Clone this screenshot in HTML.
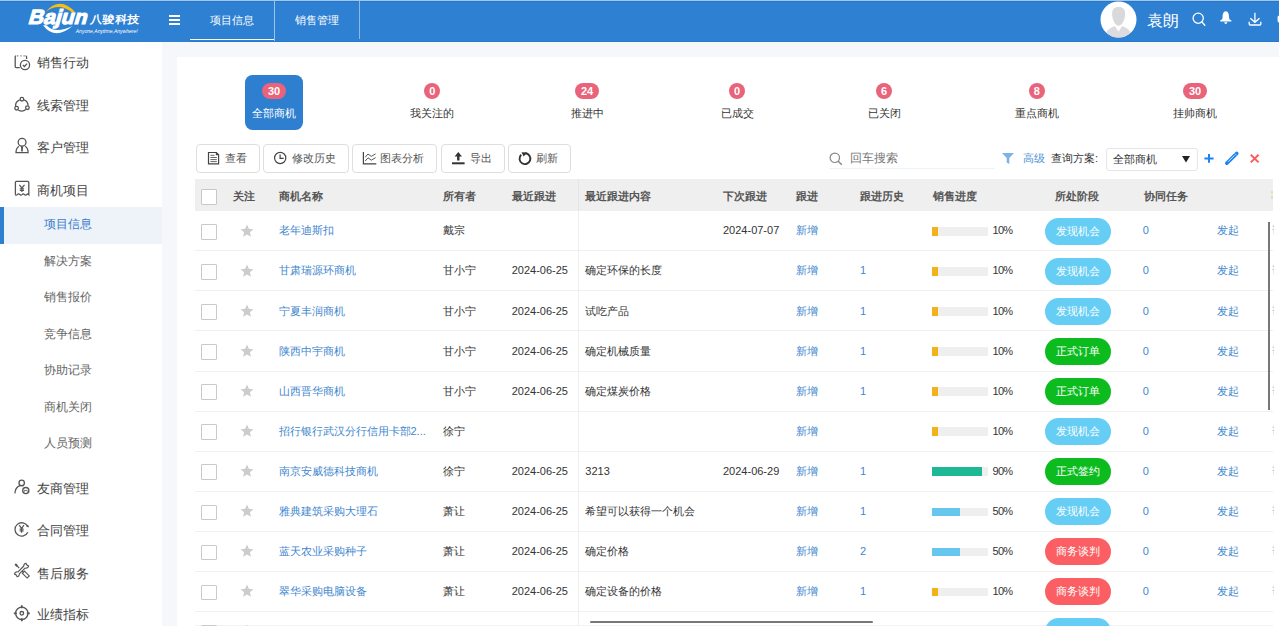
<!DOCTYPE html>
<html><head><meta charset="utf-8"><title>商机项目</title>
<style>
*{margin:0;padding:0;box-sizing:border-box}
html,body{width:1279px;height:626px;overflow:hidden}
body{position:relative;font-family:"Liberation Sans",sans-serif;background:#f5f7fb;color:#333}
.a{position:absolute}
.t{position:absolute;white-space:nowrap}
svg{position:absolute;overflow:visible}
</style></head><body>
<div class="a" style="left:0;top:0;width:1279px;height:42px;background:#2e80d2"></div>
<div class="a" style="left:0;top:0;width:1279px;height:1px;background:#a3c6ea"></div>
<div class="a" style="left:0;top:1px;width:1279px;height:1px;background:#2277d0"></div>
<svg style="left:0;top:0" width="160" height="42" viewBox="0 0 160 42">
<path d="M45.5 12 Q60 -4.5 75.5 12.5 L72.5 12.8 Q59 1.5 45.5 12 Z" fill="#f9bd12"/>
<path d="M43 25.2 Q55 41 72.5 26 Q55 34.5 46.5 25.2 Z" fill="#fff"/>
<g transform="translate(27.5,24) skewX(-16)"><text x="0" y="0" font-family="Liberation Sans" font-weight="bold" font-size="20.5" fill="#fff" stroke="#fff" stroke-width="1.1" textLength="58.5" lengthAdjust="spacingAndGlyphs">Bajun</text></g>
<g transform="translate(75.5,33.2) skewX(-10)"><text x="0" y="0" font-family="Liberation Sans" font-size="5.6" fill="#fff" textLength="62" lengthAdjust="spacingAndGlyphs">Anyone,Anytime,Anywhere!</text></g>
</svg>
<div class="t" style="left:89.5px;top:12.0px;font-size:12px;line-height:14px;color:#fff;font-weight:bold;letter-spacing:0.6px;transform:skewX(-6deg) scaleY(0.9)">八骏科技</div>
<div class="a" style="left:169px;top:15px;width:11px;height:2px;background:#fff"></div><div class="a" style="left:169px;top:19px;width:11px;height:2px;background:#fff"></div><div class="a" style="left:169px;top:23px;width:11px;height:2px;background:#fff"></div>
<div class="t" style="left:210px;top:12.5px;font-size:11px;line-height:14px;color:#fff;font-weight:normal;">项目信息</div>
<div class="a" style="left:190px;top:41px;width:1089px;height:1px;background:#2578d0"></div>
<div class="a" style="left:190px;top:38.6px;width:84.5px;height:1.7px;background:#fff"></div>
<div class="a" style="left:274px;top:0;width:1px;height:41px;background:#9cc2ea"></div>
<div class="t" style="left:295px;top:12.5px;font-size:11px;line-height:14px;color:#fff;font-weight:normal;">销售管理</div>
<div class="a" style="left:359px;top:1px;width:1px;height:38px;background:#8db8e6"></div>
<svg style="left:1100px;top:1px" width="37" height="37" viewBox="0 0 37 37">
<defs><clipPath id="cav"><circle cx="18.5" cy="18.5" r="18"/></clipPath></defs>
<circle cx="18.5" cy="18.5" r="18" fill="#fff"/>
<g clip-path="url(#cav)" fill="#d9d9dc">
<path d="M18.6 6 C14.2 6 12.1 8.3 12.1 12.8 C12.1 18.8 15.2 24.8 18.6 24.8 C22 24.8 25.1 18.8 25.1 12.8 C25.1 8.3 23 6 18.6 6 Z"/>
<path d="M4.5 37 C5 30.5 8.5 27.6 14.8 24.9 L18.5 30.6 L22.2 24.9 C28.5 27.6 32 30.5 32.5 37 Z" fill="#dcdce0"/>
</g></svg>
<div class="t" style="left:1146.8px;top:10.7px;font-size:16px;line-height:20px;color:#fff;font-weight:normal;">袁朗</div>
<svg style="left:1180px;top:0" width="99" height="42" viewBox="1180 0 99 42">
<circle cx="1198.2" cy="18.2" r="5.1" fill="none" stroke="#fff" stroke-width="1.3"/>
<path d="M1201.9 21.9 L1204.8 25.2" stroke="#fff" stroke-width="1.4" stroke-linecap="round"/>
<path d="M1225.8 11.2 C1223.2 11.2 1222.6 14.5 1222.6 17 L1222.2 19.2 L1220.2 20.6 L1220.2 21.4 L1231.4 21.4 L1231.4 20.6 L1229.4 19.2 L1229 17 C1229 14.5 1228.4 11.2 1225.8 11.2 Z" fill="#fff"/>
<path d="M1224.1 22.3 L1227.5 22.3 Q1227 24.1 1225.8 24.1 Q1224.6 24.1 1224.1 22.3 Z" fill="#fff"/>
<path d="M1254.9 12.8 L1254.9 22 M1250.3 18.2 L1254.9 22.3 L1259.5 18.2" fill="none" stroke="#fff" stroke-width="1.3"/>
<path d="M1249.2 21.8 L1249.2 24 Q1249.2 25 1250.2 25 L1259.8 25 Q1260.8 25 1260.8 24 L1260.8 21.8" fill="none" stroke="#fff" stroke-width="1.3"/>
<rect x="1277.6" y="15.6" width="6" height="7" rx="1.5" fill="#fff"/>
</svg>
<div class="a" style="left:0;top:42px;width:162px;height:584px;background:#fff"></div>
<div class="t" style="left:37px;top:54.7px;font-size:13px;line-height:16px;color:#444;font-weight:normal;">销售行动</div>
<div class="t" style="left:37px;top:98.0px;font-size:13px;line-height:16px;color:#444;font-weight:normal;">线索管理</div>
<div class="t" style="left:37px;top:140.3px;font-size:13px;line-height:16px;color:#444;font-weight:normal;">客户管理</div>
<div class="t" style="left:37px;top:182.5px;font-size:13px;line-height:16px;color:#444;font-weight:normal;">商机项目</div>
<div class="t" style="left:37px;top:480.7px;font-size:13px;line-height:16px;color:#444;font-weight:normal;">友商管理</div>
<div class="t" style="left:37px;top:523.2px;font-size:13px;line-height:16px;color:#444;font-weight:normal;">合同管理</div>
<div class="t" style="left:37px;top:565.7px;font-size:13px;line-height:16px;color:#444;font-weight:normal;">售后服务</div>
<div class="t" style="left:37px;top:606.9px;font-size:13px;line-height:16px;color:#444;font-weight:normal;">业绩指标</div>
<div class="a" style="left:0;top:207px;width:162px;height:37px;background:#eef2f9"></div>
<div class="a" style="left:0;top:207px;width:4px;height:37px;background:#2f7fd1"></div>
<div class="t" style="left:44px;top:216.0px;font-size:12px;line-height:16px;color:#3a80cc;font-weight:normal;">项目信息</div>
<div class="t" style="left:44px;top:252.5px;font-size:12px;line-height:16px;color:#666;font-weight:normal;">解决方案</div>
<div class="t" style="left:44px;top:289.0px;font-size:12px;line-height:16px;color:#666;font-weight:normal;">销售报价</div>
<div class="t" style="left:44px;top:325.5px;font-size:12px;line-height:16px;color:#666;font-weight:normal;">竞争信息</div>
<div class="t" style="left:44px;top:362.0px;font-size:12px;line-height:16px;color:#666;font-weight:normal;">协助记录</div>
<div class="t" style="left:44px;top:398.5px;font-size:12px;line-height:16px;color:#666;font-weight:normal;">商机关闭</div>
<div class="t" style="left:44px;top:435.0px;font-size:12px;line-height:16px;color:#666;font-weight:normal;">人员预测</div>
<svg style="left:0;top:0" width="40" height="626" viewBox="0 0 40 626">
<g fill="none" stroke="#555" stroke-width="1.3">
<path d="M19.8 67.6 L16.2 67.6 Q15.2 67.6 15.2 66.6 L15.2 56.8 Q15.2 55.9 16.2 55.9"/>
<path d="M17.3 55.9 L18.3 55.9 M20.5 55.9 L21.5 55.9 M23.6 55.9 L24.6 55.9"/>
<path d="M25.6 55.9 Q26.6 55.9 26.6 56.9 L26.6 59"/>
<circle cx="25" cy="65" r="4.6"/>
<path d="M22.9 65 L24.4 66.5 L27.1 63.6"/>
<path d="M19.7 99.8 A6.4 6.4 0 0 0 15.6 106.3"/>
<path d="M24.1 99.8 A6.4 6.4 0 0 1 28.1 105.6"/>
<path d="M18.3 110 A6.4 6.4 0 0 0 25.8 109.6"/>
<circle cx="21.9" cy="99.2" r="1.8"/>
<circle cx="16.6" cy="108.2" r="1.8"/>
<circle cx="27.4" cy="107.7" r="1.8"/>
<circle cx="22.1" cy="142.3" r="3.9"/>
<path d="M19 146.3 Q16 148 16 152.7 L28.1 152.7 Q28.1 148 25.2 146.3"/>
<path d="M15.4 194.6 L15.4 182.4 Q15.4 181.4 16.4 181.4 L27.8 181.4 Q28.8 181.4 28.8 182.4 L28.8 194.6 Q27.8 193.4 26.8 194.6 Q25.5 195.8 24.3 194.4 Q23.1 193.3 22 194.6 Q20.8 195.8 19.7 194.4 Q18.4 193.3 17.4 194.6 Q16.2 195.8 15.4 194.6"/>
<circle cx="21.7" cy="482.9" r="2.7"/>
<path d="M23.6 485.7 L19.8 485.7 Q15.2 487.6 14.9 493.4"/>
<circle cx="25.8" cy="490.6" r="3.1"/>
<path d="M27.8 532.2 A6.7 6.7 0 1 1 27.6 526.3"/>
<circle cx="21.8" cy="613.3" r="6.2"/>
<circle cx="21.8" cy="613.3" r="1.8"/>
</g>
<path d="M22 146 L23 146.5 L22.8 151 L22 152 L21.2 151 L21 146.5 Z" fill="#555"/>
<path d="M19.3 184.8 L21.9 188 L24.5 184.8 M21.9 188 L21.9 192 M19.8 188.8 L24 188.8 M19.8 190.5 L24 190.5" fill="none" stroke="#555" stroke-width="1.2"/>
<path d="M19.3 525.2 L21.6 528.5 L23.9 525.2 M21.6 528.5 L21.6 532.8 M19.6 529.2 L23.6 529.2 M19.6 530.9 L23.6 530.9" fill="none" stroke="#555" stroke-width="1.2"/>
<path d="M26.2 526.6 L29.1 527.5 L28 524.4 Z" fill="#555"/>
<path d="M24.2 491.8 L24.8 489.9 L25.8 491 L26.8 489.9 L27.4 491.8" fill="none" stroke="#555" stroke-width="0.8"/>
<path d="M21.8 605.3 L21.8 608.3 M21.8 618.3 L21.8 621.3 M13.8 613.3 L16.8 613.3 M26.8 613.3 L29.8 613.3" stroke="#555" stroke-width="1.8"/>
<g fill="none" stroke="#555" stroke-width="1.15">
<path d="M19.27 573.93 L25.28 567.92 M17.75 572.05 L23.82 565.98"/>
<path d="M23.82 565.98 A2.4 2.4 0 0 1 25.99 563.31 L26.9 565 L28.59 565.91 A2.4 2.4 0 0 1 25.28 567.92"/>
<path d="M19.27 573.93 A2.4 2.4 0 0 1 17.11 576.69 L16.2 575 L14.51 574.09 A2.4 2.4 0 0 1 17.75 572.05"/>
<path d="M17.3 566.1 L19.2 568 M22 570.8 L23.4 572.2"/>
<path d="M24.46 571.14 L29.26 575.94 L27.14 578.06 L22.34 573.26 Z"/>
</g>
<path d="M15.2 564 L17.4 566.2" stroke="#555" stroke-width="2"/>
</svg>
<div class="a" style="left:177px;top:57px;width:1102px;height:569px;background:#fff"></div>
<div class="a" style="left:244.7px;top:75px;width:58.8px;height:54.6px;background:#2f7fd1;border-radius:7.5px"></div>
<div class="a" style="left:262.0px;top:83px;width:24px;height:16px;border-radius:8px;background:#e9637a;color:#fff;font-size:11px;font-weight:bold;line-height:16px;text-align:center">30</div>
<div class="t" style="left:234px;width:80px;text-align:center;top:105.3px;font-size:11px;line-height:16px;color:#fff">全部商机</div>
<div class="a" style="left:424.3px;top:83px;width:16px;height:16px;border-radius:8px;background:#e9637a;color:#fff;font-size:11px;font-weight:bold;line-height:16px;text-align:center">0</div>
<div class="t" style="left:392.3px;width:80px;text-align:center;top:105.3px;font-size:11px;line-height:16px;color:#333">我关注的</div>
<div class="a" style="left:575.0px;top:83px;width:24px;height:16px;border-radius:8px;background:#e9637a;color:#fff;font-size:11px;font-weight:bold;line-height:16px;text-align:center">24</div>
<div class="t" style="left:547px;width:80px;text-align:center;top:105.3px;font-size:11px;line-height:16px;color:#333">推进中</div>
<div class="a" style="left:729.0px;top:83px;width:16px;height:16px;border-radius:8px;background:#e9637a;color:#fff;font-size:11px;font-weight:bold;line-height:16px;text-align:center">0</div>
<div class="t" style="left:697px;width:80px;text-align:center;top:105.3px;font-size:11px;line-height:16px;color:#333">已成交</div>
<div class="a" style="left:876.0px;top:83px;width:16px;height:16px;border-radius:8px;background:#e9637a;color:#fff;font-size:11px;font-weight:bold;line-height:16px;text-align:center">6</div>
<div class="t" style="left:844px;width:80px;text-align:center;top:105.3px;font-size:11px;line-height:16px;color:#333">已关闭</div>
<div class="a" style="left:1028.7px;top:83px;width:16px;height:16px;border-radius:8px;background:#e9637a;color:#fff;font-size:11px;font-weight:bold;line-height:16px;text-align:center">8</div>
<div class="t" style="left:996.7px;width:80px;text-align:center;top:105.3px;font-size:11px;line-height:16px;color:#333">重点商机</div>
<div class="a" style="left:1183.0px;top:83px;width:24px;height:16px;border-radius:8px;background:#e9637a;color:#fff;font-size:11px;font-weight:bold;line-height:16px;text-align:center">30</div>
<div class="t" style="left:1155px;width:80px;text-align:center;top:105.3px;font-size:11px;line-height:16px;color:#333">挂帅商机</div>
<div class="a" style="left:196px;top:144px;width:64px;height:29px;border:1px solid #dedede;border-radius:4px;background:#fff"></div>
<div class="a" style="left:263px;top:144px;width:86px;height:29px;border:1px solid #dedede;border-radius:4px;background:#fff"></div>
<div class="a" style="left:352px;top:144px;width:85px;height:29px;border:1px solid #dedede;border-radius:4px;background:#fff"></div>
<div class="a" style="left:441px;top:144px;width:64px;height:29px;border:1px solid #dedede;border-radius:4px;background:#fff"></div>
<div class="a" style="left:508px;top:144px;width:63px;height:29px;border:1px solid #dedede;border-radius:4px;background:#fff"></div>
<svg style="left:0;top:0" width="600" height="180" viewBox="0 0 600 180">
<path d="M208.5 152.5 L216.3 152.5 L218.6 154.8 L218.6 163.8 L208.5 163.8 Z" fill="none" stroke="#444" stroke-width="1.2"/>
<path d="M215.8 152 L219 155.3 L215.8 155.3 Z" fill="#444"/>
<path d="M210.4 155.3 L214.5 155.3 M210.4 157.5 L216.8 157.5 M210.4 159.6 L216.8 159.6 M210.4 161.6 L216.8 161.6" stroke="#555" stroke-width="0.9"/>
<circle cx="280.2" cy="158" r="5.6" fill="none" stroke="#444" stroke-width="1.2"/>
<path d="M280.1 154.6 L280.1 158.4 L283.7 158.4" fill="none" stroke="#444" stroke-width="1.2"/>
<path d="M363.4 152 L363.4 163.8 L376.3 163.8" fill="none" stroke="#444" stroke-width="1.2"/>
<path d="M365.2 157.2 L368 154 L371.3 156.4 L375.6 153.8 M365.2 161 L368 157.8 L371.3 160.2 L375.6 157.6" fill="none" stroke="#555" stroke-width="1"/>
<path d="M458.3 152 L454.6 156.4 L457.1 156.4 L457.1 160.4 L459.5 160.4 L459.5 156.4 L462 156.4 Z" fill="#333"/>
<path d="M452 163.3 L464.6 163.3" stroke="#333" stroke-width="2"/>
<path d="M521.2 154.8 A5.4 5.4 0 1 0 525.3 153.3" fill="none" stroke="#333" stroke-width="1.9"/>
<path d="M521.5 152.2 L527.3 152.6 L523.6 156.6 Z" fill="#333"/>
</svg>
<div class="t" style="left:224.5px;top:149.5px;font-size:11px;line-height:16px;color:#555;font-weight:normal;">查看</div>
<div class="t" style="left:291.5px;top:149.5px;font-size:11px;line-height:16px;color:#555;font-weight:normal;">修改历史</div>
<div class="t" style="left:380px;top:149.5px;font-size:11px;line-height:16px;color:#555;font-weight:normal;">图表分析</div>
<div class="t" style="left:469.5px;top:149.5px;font-size:11px;line-height:16px;color:#555;font-weight:normal;">导出</div>
<div class="t" style="left:536px;top:149.5px;font-size:11px;line-height:16px;color:#555;font-weight:normal;">刷新</div>
<svg style="left:829px;top:152px" width="15" height="14" viewBox="0 0 15 14"><circle cx="5.8" cy="5.8" r="4.7" fill="none" stroke="#888" stroke-width="1.2"/><path d="M9.2 9.2 L12.8 12.8" stroke="#888" stroke-width="1.5"/></svg>
<div class="t" style="left:850px;top:150.0px;font-size:12px;line-height:16px;color:#777;font-weight:normal;">回车搜索</div>
<div class="a" style="left:829px;top:168px;width:166px;height:1px;background:#eef3f8"></div>
<svg style="left:1002px;top:153px" width="12" height="11" viewBox="0 0 12 11"><path d="M0 0 L12 0 L7.3 5 L7.3 11 L4.7 9.5 L4.7 5 Z" fill="#7db2e3"/></svg>
<div class="t" style="left:1023px;top:150.0px;font-size:11px;line-height:16px;color:#4d92d6;font-weight:normal;">高级</div>
<div class="t" style="left:1051px;top:150.0px;font-size:11px;line-height:16px;color:#333;font-weight:normal;">查询方案:</div>
<div class="a" style="left:1106px;top:148px;width:92px;height:23px;border:1px solid #e6e6e6;border-radius:3px;background:#fff"></div>
<div class="t" style="left:1113px;top:151.0px;font-size:11px;line-height:16px;color:#333;font-weight:normal;">全部商机</div>
<svg style="left:1182px;top:155.5px" width="8" height="7" viewBox="0 0 8 7"><path d="M0 0 L8 0 L4 6.5 Z" fill="#222"/></svg>
<svg style="left:1195px;top:145px" width="80" height="30" viewBox="1195 145 80 30">
<path d="M1209 154 L1209 162.8 M1204.4 158.4 L1213.6 158.4" stroke="#1b84f2" stroke-width="2"/>
<path d="M1226.8 163.2 L1236.8 153.4" stroke="#1b84f2" stroke-width="3.6" stroke-linecap="round"/>
<path d="M1228.2 161.6 L1234.6 155.3" stroke="#fff" stroke-width="0.8"/>
<path d="M1234.9 153.6 L1236.6 155.3" stroke="#fff" stroke-width="0.7"/>
<path d="M1250.8 154.7 L1258.6 162.4 M1258.6 154.7 L1250.8 162.4" stroke="#fd5b5b" stroke-width="1.9"/>
</svg>
<div class="a" style="left:195px;top:179px;width:1078px;height:32px;background:#efefef"></div>
<div class="a" style="left:201px;top:189px;width:15.5px;height:15.5px;border:1px solid #c8c8c8;border-radius:1px;background:#fff"></div>
<div class="t" style="left:232.7px;top:188.0px;font-size:11px;line-height:16px;color:#555;font-weight:bold;">关注</div>
<div class="t" style="left:278.5px;top:188.0px;font-size:11px;line-height:16px;color:#555;font-weight:bold;">商机名称</div>
<div class="t" style="left:443.3px;top:188.0px;font-size:11px;line-height:16px;color:#555;font-weight:bold;">所有者</div>
<div class="t" style="left:511.7px;top:188.0px;font-size:11px;line-height:16px;color:#555;font-weight:bold;">最近跟进</div>
<div class="t" style="left:585.3px;top:188.0px;font-size:11px;line-height:16px;color:#555;font-weight:bold;">最近跟进内容</div>
<div class="t" style="left:722.9px;top:188.0px;font-size:11px;line-height:16px;color:#555;font-weight:bold;">下次跟进</div>
<div class="t" style="left:796.2px;top:188.0px;font-size:11px;line-height:16px;color:#555;font-weight:bold;">跟进</div>
<div class="t" style="left:860.2px;top:188.0px;font-size:11px;line-height:16px;color:#555;font-weight:bold;">跟进历史</div>
<div class="t" style="left:933px;top:188.0px;font-size:11px;line-height:16px;color:#555;font-weight:bold;">销售进度</div>
<div class="t" style="left:1055.4px;top:188.0px;font-size:11px;line-height:16px;color:#555;font-weight:bold;">所处阶段</div>
<div class="t" style="left:1143.8px;top:188.0px;font-size:11px;line-height:16px;color:#555;font-weight:bold;">协同任务</div>
<div class="a" style="left:1271px;top:191px;width:2px;height:3px;background:#f5dcb0"></div>
<div class="a" style="left:1271px;top:196px;width:2px;height:2.5px;background:#dcdcdc"></div>
<div class="a" style="left:578px;top:179px;width:1px;height:447px;background:#eeeeee"></div>
<div class="a" style="left:578px;top:179px;width:1px;height:32px;background:#e5e5e5"></div>
<div class="a" style="left:195px;top:625px;width:1078px;height:1px;background:#f2f2f2"></div>
<div class="a" style="left:195px;top:250.3px;width:1078px;height:1px;background:#f0f0f0"></div>
<div class="a" style="left:201px;top:224.0px;width:15.5px;height:15.5px;border:1px solid #cacaca;border-radius:1px;background:#fff"></div>
<svg style="left:240px;top:223.5px" width="14" height="14" viewBox="0 0 24 24"><path d="M12 1 L15.1 8.3 L23 9 L17 14.2 L18.8 22 L12 17.9 L5.2 22 L7 14.2 L1 9 L8.9 8.3 Z" fill="#cccccc"/></svg>
<div class="t" style="left:278.5px;top:222.4px;font-size:11px;line-height:16px;color:#3f87cf;font-weight:normal;">老年迪斯扣</div>
<div class="t" style="left:443.3px;top:222.4px;font-size:11px;line-height:16px;color:#333;font-weight:normal;">戴宗</div>
<div class="t" style="left:723px;top:222.4px;font-size:11px;line-height:16px;color:#333;font-weight:normal;">2024-07-07</div>
<div class="t" style="left:796px;top:222.4px;font-size:11px;line-height:16px;color:#3f87cf;font-weight:normal;">新增</div>
<div class="a" style="left:932px;top:227.0px;width:56px;height:8.6px;background:#efefef"></div>
<div class="a" style="left:932px;top:227.0px;width:5.6px;height:8.6px;background:#f3b21a"></div>
<div class="t" style="left:992.5px;top:222.4px;font-size:11px;line-height:16px;color:#333;font-weight:normal;letter-spacing:-0.7px">10%</div>
<div class="a" style="left:1044.5px;top:217.5px;width:66px;height:27px;border-radius:14px;background:#66cdf5;color:#fff;font-size:11px;line-height:26px;text-align:center">发现机会</div>
<div class="t" style="left:1142.8px;top:222.4px;font-size:11px;line-height:16px;color:#3f87cf;font-weight:normal;">0</div>
<div class="t" style="left:1216.5px;top:222.4px;font-size:11px;line-height:16px;color:#3f87cf;font-weight:normal;">发起</div>
<div class="a" style="left:1272px;top:225.4px;width:2px;height:10px;overflow:hidden;opacity:0.6"><div class="t" style="left:0;top:-3px;font-size:11px;line-height:16px;color:#3f87cf">详</div></div>
<div class="a" style="left:195px;top:290.38px;width:1078px;height:1px;background:#f0f0f0"></div>
<div class="a" style="left:201px;top:264.08px;width:15.5px;height:15.5px;border:1px solid #cacaca;border-radius:1px;background:#fff"></div>
<svg style="left:240px;top:263.58px" width="14" height="14" viewBox="0 0 24 24"><path d="M12 1 L15.1 8.3 L23 9 L17 14.2 L18.8 22 L12 17.9 L5.2 22 L7 14.2 L1 9 L8.9 8.3 Z" fill="#cccccc"/></svg>
<div class="t" style="left:278.5px;top:262.47999999999996px;font-size:11px;line-height:16px;color:#3f87cf;font-weight:normal;">甘肃瑞源环商机</div>
<div class="t" style="left:443.3px;top:262.47999999999996px;font-size:11px;line-height:16px;color:#333;font-weight:normal;">甘小宁</div>
<div class="t" style="left:511.7px;top:262.47999999999996px;font-size:11px;line-height:16px;color:#333;font-weight:normal;">2024-06-25</div>
<div class="t" style="left:585.3px;top:262.47999999999996px;font-size:11px;line-height:16px;color:#333;font-weight:normal;">确定环保的长度</div>
<div class="t" style="left:796px;top:262.47999999999996px;font-size:11px;line-height:16px;color:#3f87cf;font-weight:normal;">新增</div>
<div class="t" style="left:860px;top:262.47999999999996px;font-size:11px;line-height:16px;color:#3f87cf;font-weight:normal;">1</div>
<div class="a" style="left:932px;top:267.08px;width:56px;height:8.6px;background:#efefef"></div>
<div class="a" style="left:932px;top:267.08px;width:5.6px;height:8.6px;background:#f3b21a"></div>
<div class="t" style="left:992.5px;top:262.47999999999996px;font-size:11px;line-height:16px;color:#333;font-weight:normal;letter-spacing:-0.7px">10%</div>
<div class="a" style="left:1044.5px;top:257.58px;width:66px;height:27px;border-radius:14px;background:#66cdf5;color:#fff;font-size:11px;line-height:26px;text-align:center">发现机会</div>
<div class="t" style="left:1142.8px;top:262.47999999999996px;font-size:11px;line-height:16px;color:#3f87cf;font-weight:normal;">0</div>
<div class="t" style="left:1216.5px;top:262.47999999999996px;font-size:11px;line-height:16px;color:#3f87cf;font-weight:normal;">发起</div>
<div class="a" style="left:1272px;top:265.47999999999996px;width:2px;height:10px;overflow:hidden;opacity:0.6"><div class="t" style="left:0;top:-3px;font-size:11px;line-height:16px;color:#3f87cf">详</div></div>
<div class="a" style="left:195px;top:330.46px;width:1078px;height:1px;background:#f0f0f0"></div>
<div class="a" style="left:201px;top:304.15999999999997px;width:15.5px;height:15.5px;border:1px solid #cacaca;border-radius:1px;background:#fff"></div>
<svg style="left:240px;top:303.65999999999997px" width="14" height="14" viewBox="0 0 24 24"><path d="M12 1 L15.1 8.3 L23 9 L17 14.2 L18.8 22 L12 17.9 L5.2 22 L7 14.2 L1 9 L8.9 8.3 Z" fill="#cccccc"/></svg>
<div class="t" style="left:278.5px;top:302.55999999999995px;font-size:11px;line-height:16px;color:#3f87cf;font-weight:normal;">宁夏丰润商机</div>
<div class="t" style="left:443.3px;top:302.55999999999995px;font-size:11px;line-height:16px;color:#333;font-weight:normal;">甘小宁</div>
<div class="t" style="left:511.7px;top:302.55999999999995px;font-size:11px;line-height:16px;color:#333;font-weight:normal;">2024-06-25</div>
<div class="t" style="left:585.3px;top:302.55999999999995px;font-size:11px;line-height:16px;color:#333;font-weight:normal;">试吃产品</div>
<div class="t" style="left:796px;top:302.55999999999995px;font-size:11px;line-height:16px;color:#3f87cf;font-weight:normal;">新增</div>
<div class="t" style="left:860px;top:302.55999999999995px;font-size:11px;line-height:16px;color:#3f87cf;font-weight:normal;">1</div>
<div class="a" style="left:932px;top:307.15999999999997px;width:56px;height:8.6px;background:#efefef"></div>
<div class="a" style="left:932px;top:307.15999999999997px;width:5.6px;height:8.6px;background:#f3b21a"></div>
<div class="t" style="left:992.5px;top:302.55999999999995px;font-size:11px;line-height:16px;color:#333;font-weight:normal;letter-spacing:-0.7px">10%</div>
<div class="a" style="left:1044.5px;top:297.65999999999997px;width:66px;height:27px;border-radius:14px;background:#66cdf5;color:#fff;font-size:11px;line-height:26px;text-align:center">发现机会</div>
<div class="t" style="left:1142.8px;top:302.55999999999995px;font-size:11px;line-height:16px;color:#3f87cf;font-weight:normal;">0</div>
<div class="t" style="left:1216.5px;top:302.55999999999995px;font-size:11px;line-height:16px;color:#3f87cf;font-weight:normal;">发起</div>
<div class="a" style="left:1272px;top:305.55999999999995px;width:2px;height:10px;overflow:hidden;opacity:0.6"><div class="t" style="left:0;top:-3px;font-size:11px;line-height:16px;color:#3f87cf">详</div></div>
<div class="a" style="left:195px;top:370.54px;width:1078px;height:1px;background:#f0f0f0"></div>
<div class="a" style="left:201px;top:344.24px;width:15.5px;height:15.5px;border:1px solid #cacaca;border-radius:1px;background:#fff"></div>
<svg style="left:240px;top:343.74px" width="14" height="14" viewBox="0 0 24 24"><path d="M12 1 L15.1 8.3 L23 9 L17 14.2 L18.8 22 L12 17.9 L5.2 22 L7 14.2 L1 9 L8.9 8.3 Z" fill="#cccccc"/></svg>
<div class="t" style="left:278.5px;top:342.64px;font-size:11px;line-height:16px;color:#3f87cf;font-weight:normal;">陕西中宇商机</div>
<div class="t" style="left:443.3px;top:342.64px;font-size:11px;line-height:16px;color:#333;font-weight:normal;">甘小宁</div>
<div class="t" style="left:511.7px;top:342.64px;font-size:11px;line-height:16px;color:#333;font-weight:normal;">2024-06-25</div>
<div class="t" style="left:585.3px;top:342.64px;font-size:11px;line-height:16px;color:#333;font-weight:normal;">确定机械质量</div>
<div class="t" style="left:796px;top:342.64px;font-size:11px;line-height:16px;color:#3f87cf;font-weight:normal;">新增</div>
<div class="t" style="left:860px;top:342.64px;font-size:11px;line-height:16px;color:#3f87cf;font-weight:normal;">1</div>
<div class="a" style="left:932px;top:347.24px;width:56px;height:8.6px;background:#efefef"></div>
<div class="a" style="left:932px;top:347.24px;width:5.6px;height:8.6px;background:#f3b21a"></div>
<div class="t" style="left:992.5px;top:342.64px;font-size:11px;line-height:16px;color:#333;font-weight:normal;letter-spacing:-0.7px">10%</div>
<div class="a" style="left:1044.5px;top:337.74px;width:66px;height:27px;border-radius:14px;background:#0cbc1f;color:#fff;font-size:11px;line-height:26px;text-align:center">正式订单</div>
<div class="t" style="left:1142.8px;top:342.64px;font-size:11px;line-height:16px;color:#3f87cf;font-weight:normal;">0</div>
<div class="t" style="left:1216.5px;top:342.64px;font-size:11px;line-height:16px;color:#3f87cf;font-weight:normal;">发起</div>
<div class="a" style="left:1272px;top:345.64px;width:2px;height:10px;overflow:hidden;opacity:0.6"><div class="t" style="left:0;top:-3px;font-size:11px;line-height:16px;color:#3f87cf">详</div></div>
<div class="a" style="left:195px;top:410.62px;width:1078px;height:1px;background:#f0f0f0"></div>
<div class="a" style="left:201px;top:384.32px;width:15.5px;height:15.5px;border:1px solid #cacaca;border-radius:1px;background:#fff"></div>
<svg style="left:240px;top:383.82px" width="14" height="14" viewBox="0 0 24 24"><path d="M12 1 L15.1 8.3 L23 9 L17 14.2 L18.8 22 L12 17.9 L5.2 22 L7 14.2 L1 9 L8.9 8.3 Z" fill="#cccccc"/></svg>
<div class="t" style="left:278.5px;top:382.71999999999997px;font-size:11px;line-height:16px;color:#3f87cf;font-weight:normal;">山西晋华商机</div>
<div class="t" style="left:443.3px;top:382.71999999999997px;font-size:11px;line-height:16px;color:#333;font-weight:normal;">甘小宁</div>
<div class="t" style="left:511.7px;top:382.71999999999997px;font-size:11px;line-height:16px;color:#333;font-weight:normal;">2024-06-25</div>
<div class="t" style="left:585.3px;top:382.71999999999997px;font-size:11px;line-height:16px;color:#333;font-weight:normal;">确定煤炭价格</div>
<div class="t" style="left:796px;top:382.71999999999997px;font-size:11px;line-height:16px;color:#3f87cf;font-weight:normal;">新增</div>
<div class="t" style="left:860px;top:382.71999999999997px;font-size:11px;line-height:16px;color:#3f87cf;font-weight:normal;">1</div>
<div class="a" style="left:932px;top:387.32px;width:56px;height:8.6px;background:#efefef"></div>
<div class="a" style="left:932px;top:387.32px;width:5.6px;height:8.6px;background:#f3b21a"></div>
<div class="t" style="left:992.5px;top:382.71999999999997px;font-size:11px;line-height:16px;color:#333;font-weight:normal;letter-spacing:-0.7px">10%</div>
<div class="a" style="left:1044.5px;top:377.82px;width:66px;height:27px;border-radius:14px;background:#0cbc1f;color:#fff;font-size:11px;line-height:26px;text-align:center">正式订单</div>
<div class="t" style="left:1142.8px;top:382.71999999999997px;font-size:11px;line-height:16px;color:#3f87cf;font-weight:normal;">0</div>
<div class="t" style="left:1216.5px;top:382.71999999999997px;font-size:11px;line-height:16px;color:#3f87cf;font-weight:normal;">发起</div>
<div class="a" style="left:1272px;top:385.71999999999997px;width:2px;height:10px;overflow:hidden;opacity:0.6"><div class="t" style="left:0;top:-3px;font-size:11px;line-height:16px;color:#3f87cf">详</div></div>
<div class="a" style="left:195px;top:450.7px;width:1078px;height:1px;background:#f0f0f0"></div>
<div class="a" style="left:201px;top:424.4px;width:15.5px;height:15.5px;border:1px solid #cacaca;border-radius:1px;background:#fff"></div>
<svg style="left:240px;top:423.9px" width="14" height="14" viewBox="0 0 24 24"><path d="M12 1 L15.1 8.3 L23 9 L17 14.2 L18.8 22 L12 17.9 L5.2 22 L7 14.2 L1 9 L8.9 8.3 Z" fill="#cccccc"/></svg>
<div class="t" style="left:278.5px;top:422.79999999999995px;font-size:11px;line-height:16px;color:#3f87cf;font-weight:normal;">招行银行武汉分行信用卡部2...</div>
<div class="t" style="left:443.3px;top:422.79999999999995px;font-size:11px;line-height:16px;color:#333;font-weight:normal;">徐宁</div>
<div class="t" style="left:796px;top:422.79999999999995px;font-size:11px;line-height:16px;color:#3f87cf;font-weight:normal;">新增</div>
<div class="a" style="left:932px;top:427.4px;width:56px;height:8.6px;background:#efefef"></div>
<div class="a" style="left:932px;top:427.4px;width:5.6px;height:8.6px;background:#f3b21a"></div>
<div class="t" style="left:992.5px;top:422.79999999999995px;font-size:11px;line-height:16px;color:#333;font-weight:normal;letter-spacing:-0.7px">10%</div>
<div class="a" style="left:1044.5px;top:417.9px;width:66px;height:27px;border-radius:14px;background:#66cdf5;color:#fff;font-size:11px;line-height:26px;text-align:center">发现机会</div>
<div class="t" style="left:1142.8px;top:422.79999999999995px;font-size:11px;line-height:16px;color:#3f87cf;font-weight:normal;">0</div>
<div class="t" style="left:1216.5px;top:422.79999999999995px;font-size:11px;line-height:16px;color:#3f87cf;font-weight:normal;">发起</div>
<div class="a" style="left:1272px;top:425.79999999999995px;width:2px;height:10px;overflow:hidden;opacity:0.6"><div class="t" style="left:0;top:-3px;font-size:11px;line-height:16px;color:#3f87cf">详</div></div>
<div class="a" style="left:195px;top:490.78000000000003px;width:1078px;height:1px;background:#f0f0f0"></div>
<div class="a" style="left:201px;top:464.48px;width:15.5px;height:15.5px;border:1px solid #cacaca;border-radius:1px;background:#fff"></div>
<svg style="left:240px;top:463.98px" width="14" height="14" viewBox="0 0 24 24"><path d="M12 1 L15.1 8.3 L23 9 L17 14.2 L18.8 22 L12 17.9 L5.2 22 L7 14.2 L1 9 L8.9 8.3 Z" fill="#cccccc"/></svg>
<div class="t" style="left:278.5px;top:462.88px;font-size:11px;line-height:16px;color:#3f87cf;font-weight:normal;">南京安威德科技商机</div>
<div class="t" style="left:443.3px;top:462.88px;font-size:11px;line-height:16px;color:#333;font-weight:normal;">徐宁</div>
<div class="t" style="left:511.7px;top:462.88px;font-size:11px;line-height:16px;color:#333;font-weight:normal;">2024-06-25</div>
<div class="t" style="left:585.3px;top:462.88px;font-size:11px;line-height:16px;color:#333;font-weight:normal;">3213</div>
<div class="t" style="left:723px;top:462.88px;font-size:11px;line-height:16px;color:#333;font-weight:normal;">2024-06-29</div>
<div class="t" style="left:796px;top:462.88px;font-size:11px;line-height:16px;color:#3f87cf;font-weight:normal;">新增</div>
<div class="t" style="left:860px;top:462.88px;font-size:11px;line-height:16px;color:#3f87cf;font-weight:normal;">1</div>
<div class="a" style="left:932px;top:467.48px;width:56px;height:8.6px;background:#efefef"></div>
<div class="a" style="left:932px;top:467.48px;width:50.4px;height:8.6px;background:#1fb894"></div>
<div class="t" style="left:992.5px;top:462.88px;font-size:11px;line-height:16px;color:#333;font-weight:normal;letter-spacing:-0.7px">90%</div>
<div class="a" style="left:1044.5px;top:457.98px;width:66px;height:27px;border-radius:14px;background:#0cbc1f;color:#fff;font-size:11px;line-height:26px;text-align:center">正式签约</div>
<div class="t" style="left:1142.8px;top:462.88px;font-size:11px;line-height:16px;color:#3f87cf;font-weight:normal;">0</div>
<div class="t" style="left:1216.5px;top:462.88px;font-size:11px;line-height:16px;color:#3f87cf;font-weight:normal;">发起</div>
<div class="a" style="left:1272px;top:465.88px;width:2px;height:10px;overflow:hidden;opacity:0.6"><div class="t" style="left:0;top:-3px;font-size:11px;line-height:16px;color:#3f87cf">详</div></div>
<div class="a" style="left:195px;top:530.86px;width:1078px;height:1px;background:#f0f0f0"></div>
<div class="a" style="left:201px;top:504.56px;width:15.5px;height:15.5px;border:1px solid #cacaca;border-radius:1px;background:#fff"></div>
<svg style="left:240px;top:504.06px" width="14" height="14" viewBox="0 0 24 24"><path d="M12 1 L15.1 8.3 L23 9 L17 14.2 L18.8 22 L12 17.9 L5.2 22 L7 14.2 L1 9 L8.9 8.3 Z" fill="#cccccc"/></svg>
<div class="t" style="left:278.5px;top:502.96px;font-size:11px;line-height:16px;color:#3f87cf;font-weight:normal;">雅典建筑采购大理石</div>
<div class="t" style="left:443.3px;top:502.96px;font-size:11px;line-height:16px;color:#333;font-weight:normal;">萧让</div>
<div class="t" style="left:511.7px;top:502.96px;font-size:11px;line-height:16px;color:#333;font-weight:normal;">2024-06-25</div>
<div class="t" style="left:585.3px;top:502.96px;font-size:11px;line-height:16px;color:#333;font-weight:normal;">希望可以获得一个机会</div>
<div class="t" style="left:796px;top:502.96px;font-size:11px;line-height:16px;color:#3f87cf;font-weight:normal;">新增</div>
<div class="t" style="left:860px;top:502.96px;font-size:11px;line-height:16px;color:#3f87cf;font-weight:normal;">1</div>
<div class="a" style="left:932px;top:507.56px;width:56px;height:8.6px;background:#efefef"></div>
<div class="a" style="left:932px;top:507.56px;width:28.0px;height:8.6px;background:#66c6ee"></div>
<div class="t" style="left:992.5px;top:502.96px;font-size:11px;line-height:16px;color:#333;font-weight:normal;letter-spacing:-0.7px">50%</div>
<div class="a" style="left:1044.5px;top:498.06px;width:66px;height:27px;border-radius:14px;background:#66cdf5;color:#fff;font-size:11px;line-height:26px;text-align:center">发现机会</div>
<div class="t" style="left:1142.8px;top:502.96px;font-size:11px;line-height:16px;color:#3f87cf;font-weight:normal;">0</div>
<div class="t" style="left:1216.5px;top:502.96px;font-size:11px;line-height:16px;color:#3f87cf;font-weight:normal;">发起</div>
<div class="a" style="left:1272px;top:505.96px;width:2px;height:10px;overflow:hidden;opacity:0.6"><div class="t" style="left:0;top:-3px;font-size:11px;line-height:16px;color:#3f87cf">详</div></div>
<div class="a" style="left:195px;top:570.9399999999999px;width:1078px;height:1px;background:#f0f0f0"></div>
<div class="a" style="left:201px;top:544.64px;width:15.5px;height:15.5px;border:1px solid #cacaca;border-radius:1px;background:#fff"></div>
<svg style="left:240px;top:544.14px" width="14" height="14" viewBox="0 0 24 24"><path d="M12 1 L15.1 8.3 L23 9 L17 14.2 L18.8 22 L12 17.9 L5.2 22 L7 14.2 L1 9 L8.9 8.3 Z" fill="#cccccc"/></svg>
<div class="t" style="left:278.5px;top:543.04px;font-size:11px;line-height:16px;color:#3f87cf;font-weight:normal;">蓝天农业采购种子</div>
<div class="t" style="left:443.3px;top:543.04px;font-size:11px;line-height:16px;color:#333;font-weight:normal;">萧让</div>
<div class="t" style="left:511.7px;top:543.04px;font-size:11px;line-height:16px;color:#333;font-weight:normal;">2024-06-25</div>
<div class="t" style="left:585.3px;top:543.04px;font-size:11px;line-height:16px;color:#333;font-weight:normal;">确定价格</div>
<div class="t" style="left:796px;top:543.04px;font-size:11px;line-height:16px;color:#3f87cf;font-weight:normal;">新增</div>
<div class="t" style="left:860px;top:543.04px;font-size:11px;line-height:16px;color:#3f87cf;font-weight:normal;">2</div>
<div class="a" style="left:932px;top:547.64px;width:56px;height:8.6px;background:#efefef"></div>
<div class="a" style="left:932px;top:547.64px;width:28.0px;height:8.6px;background:#66c6ee"></div>
<div class="t" style="left:992.5px;top:543.04px;font-size:11px;line-height:16px;color:#333;font-weight:normal;letter-spacing:-0.7px">50%</div>
<div class="a" style="left:1044.5px;top:538.14px;width:66px;height:27px;border-radius:14px;background:#fb5f63;color:#fff;font-size:11px;line-height:26px;text-align:center">商务谈判</div>
<div class="t" style="left:1142.8px;top:543.04px;font-size:11px;line-height:16px;color:#3f87cf;font-weight:normal;">0</div>
<div class="t" style="left:1216.5px;top:543.04px;font-size:11px;line-height:16px;color:#3f87cf;font-weight:normal;">发起</div>
<div class="a" style="left:1272px;top:546.04px;width:2px;height:10px;overflow:hidden;opacity:0.6"><div class="t" style="left:0;top:-3px;font-size:11px;line-height:16px;color:#3f87cf">详</div></div>
<div class="a" style="left:195px;top:611.02px;width:1078px;height:1px;background:#f0f0f0"></div>
<div class="a" style="left:201px;top:584.72px;width:15.5px;height:15.5px;border:1px solid #cacaca;border-radius:1px;background:#fff"></div>
<svg style="left:240px;top:584.22px" width="14" height="14" viewBox="0 0 24 24"><path d="M12 1 L15.1 8.3 L23 9 L17 14.2 L18.8 22 L12 17.9 L5.2 22 L7 14.2 L1 9 L8.9 8.3 Z" fill="#cccccc"/></svg>
<div class="t" style="left:278.5px;top:583.12px;font-size:11px;line-height:16px;color:#3f87cf;font-weight:normal;">翠华采购电脑设备</div>
<div class="t" style="left:443.3px;top:583.12px;font-size:11px;line-height:16px;color:#333;font-weight:normal;">萧让</div>
<div class="t" style="left:511.7px;top:583.12px;font-size:11px;line-height:16px;color:#333;font-weight:normal;">2024-06-25</div>
<div class="t" style="left:585.3px;top:583.12px;font-size:11px;line-height:16px;color:#333;font-weight:normal;">确定设备的价格</div>
<div class="t" style="left:796px;top:583.12px;font-size:11px;line-height:16px;color:#3f87cf;font-weight:normal;">新增</div>
<div class="t" style="left:860px;top:583.12px;font-size:11px;line-height:16px;color:#3f87cf;font-weight:normal;">1</div>
<div class="a" style="left:932px;top:587.72px;width:56px;height:8.6px;background:#efefef"></div>
<div class="a" style="left:932px;top:587.72px;width:5.6px;height:8.6px;background:#f3b21a"></div>
<div class="t" style="left:992.5px;top:583.12px;font-size:11px;line-height:16px;color:#333;font-weight:normal;letter-spacing:-0.7px">10%</div>
<div class="a" style="left:1044.5px;top:578.22px;width:66px;height:27px;border-radius:14px;background:#fb5f63;color:#fff;font-size:11px;line-height:26px;text-align:center">商务谈判</div>
<div class="t" style="left:1142.8px;top:583.12px;font-size:11px;line-height:16px;color:#3f87cf;font-weight:normal;">0</div>
<div class="t" style="left:1216.5px;top:583.12px;font-size:11px;line-height:16px;color:#3f87cf;font-weight:normal;">发起</div>
<div class="a" style="left:1272px;top:586.12px;width:2px;height:10px;overflow:hidden;opacity:0.6"><div class="t" style="left:0;top:-3px;font-size:11px;line-height:16px;color:#3f87cf">详</div></div>
<div class="a" style="left:195px;top:651.0999999999999px;width:1078px;height:1px;background:#f0f0f0"></div>
<div class="a" style="left:201px;top:624.8px;width:15.5px;height:15.5px;border:1px solid #cacaca;border-radius:1px;background:#fff"></div>
<svg style="left:240px;top:624.3px" width="14" height="14" viewBox="0 0 24 24"><path d="M12 1 L15.1 8.3 L23 9 L17 14.2 L18.8 22 L12 17.9 L5.2 22 L7 14.2 L1 9 L8.9 8.3 Z" fill="#cccccc"/></svg>
<div class="t" style="left:796px;top:623.1999999999999px;font-size:11px;line-height:16px;color:#3f87cf;font-weight:normal;">新增</div>
<div class="a" style="left:932px;top:627.8px;width:56px;height:8.6px;background:#efefef"></div>
<div class="a" style="left:932px;top:627.8px;width:5.6px;height:8.6px;background:#f3b21a"></div>
<div class="t" style="left:992.5px;top:623.1999999999999px;font-size:11px;line-height:16px;color:#333;font-weight:normal;letter-spacing:-0.7px">10%</div>
<div class="a" style="left:1044.5px;top:618.3px;width:66px;height:27px;border-radius:14px;background:#66cdf5;color:#fff;font-size:11px;line-height:26px;text-align:center">发现机会</div>
<div class="t" style="left:1142.8px;top:623.1999999999999px;font-size:11px;line-height:16px;color:#3f87cf;font-weight:normal;">0</div>
<div class="t" style="left:1216.5px;top:623.1999999999999px;font-size:11px;line-height:16px;color:#3f87cf;font-weight:normal;">发起</div>
<div class="a" style="left:1272px;top:626.1999999999999px;width:2px;height:10px;overflow:hidden;opacity:0.6"><div class="t" style="left:0;top:-3px;font-size:11px;line-height:16px;color:#3f87cf">详</div></div>
<div class="a" style="left:1268px;top:222px;width:2px;height:188px;background:#777"></div>
<div class="a" style="left:590px;top:621px;width:283px;height:2px;background:#777;border-radius:1px"></div>
</body></html>
